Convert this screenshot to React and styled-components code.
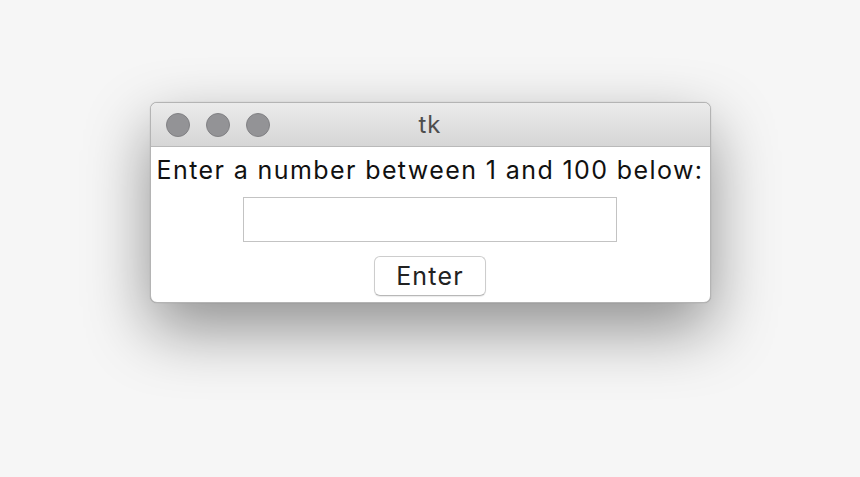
import React from 'react';
import styled, { createGlobalStyle } from 'styled-components';

const GlobalStyle = createGlobalStyle`
    html, body {
        margin: 0;
        padding: 0;
        background: #f6f6f6;
    }
`;

const Desktop = styled.div`
    display: flex;
    justify-content: center;
    align-items: flex-start;
    height: 477px;
    padding-top: 102px;
    box-sizing: border-box;
    font-family: "Inter", "Liberation Sans", Arial, sans-serif;
`;

const Window = styled.div`
    width: 561px;
    border-radius: 7px;
    overflow: hidden;
    background: #ffffff;
    border: 1px solid #b4b4b4;
    box-sizing: border-box;
    box-shadow: 0 26px 64px rgba(0, 0, 0, 0.42), 0 0 1px rgba(0, 0, 0, 0.3);
`;

const TitleBar = styled.div`
    position: relative;
    display: flex;
    align-items: center;
    justify-content: center;
    height: 43px;
    background: linear-gradient(#ebebeb, #d6d6d6);
    border-bottom: 1px solid #b9b9b9;
`;

const Lights = styled.div`
    position: absolute;
    left: 15px;
    top: 10px;
    display: flex;
    gap: 16px;
`;

const Light = styled.span`
    width: 22px;
    height: 22px;
    border-radius: 50%;
    background: #939396;
    border: 1px solid #818184;
`;

const Title = styled.div`
    font-size: 24px;
    color: #4d4d4d;
    letter-spacing: 1px;
`;

const Body = styled.div`
    display: flex;
    flex-direction: column;
    align-items: center;
    padding: 8px 0 6px;
`;

const Prompt = styled.div`
    font-size: 25px;
    line-height: 30px;
    letter-spacing: 1.4px;
    color: #111;
    white-space: nowrap;
`;

const Field = styled.input`
    margin-top: 12px;
    width: 374px;
    height: 45px;
    box-sizing: border-box;
    border: 1px solid #c3c3c3;
    outline: none;
    background: #fff;
`;

const Button = styled.button`
    margin-top: 14px;
    width: 112px;
    height: 40px;
    box-sizing: border-box;
    border: 1px solid #cdcdcd;
    border-bottom-color: #b8b8b8;
    border-radius: 6px;
    background: #fff;
    font-family: inherit;
    font-size: 25px;
    letter-spacing: 1.2px;
    color: #222;
    padding: 0;
    box-shadow: 0 1px 1px rgba(0, 0, 0, 0.08);
`;

export default function App() {
    return (
        <>
            <GlobalStyle />
            <Desktop>
                <Window>
                    <TitleBar>
                        <Lights>
                            <Light />
                            <Light />
                            <Light />
                        </Lights>
                        <Title>tk</Title>
                    </TitleBar>
                    <Body>
                        <Prompt>Enter a number between 1 and 100 below:</Prompt>
                        <Field type="text" />
                        <Button>Enter</Button>
                    </Body>
                </Window>
            </Desktop>
        </>
    );
}
